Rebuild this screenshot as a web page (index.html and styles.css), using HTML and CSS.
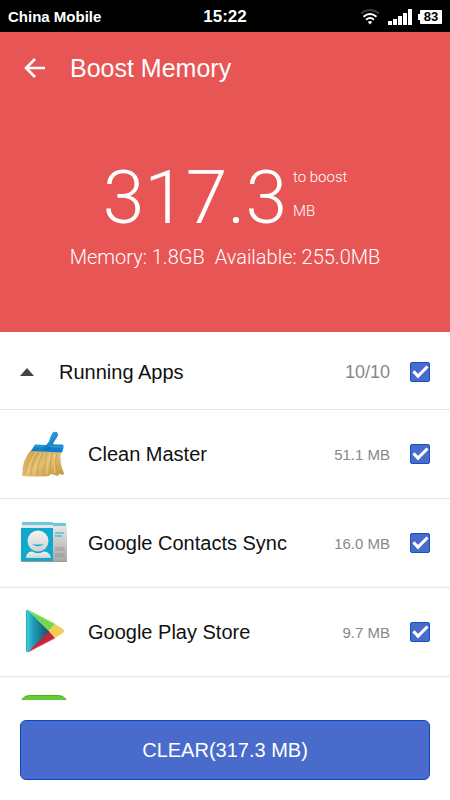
FILE: index.html
```html
<!DOCTYPE html>
<html lang="en">
<head>
    <meta charset="UTF-8">
    <title>Boost Memory</title>
    <meta name="viewport" content="width=device-width, initial-scale=1.0">
    <link rel="stylesheet" href="styles.css">
</head>
<body>
    <div class="status-bar">
        <span class="carrier">China Mobile</span>
        <span class="clock">15:22</span>
        <div class="status-icons">
            <svg class="wifi" width="20" height="16" viewBox="0 0 20 16" fill="none" stroke-width="2">
                <path d="M1 4.500Q10 -2.500 19 4.500" stroke="#3a3a3a"/>
                <path d="M3.500 7.700Q10 2.300 16.500 7.700M6 10.700Q10 7.300 14 10.700" stroke="#fff"/>
                <path d="M7.800 13Q10 11.200 12.200 13L10 15.500z" fill="#fff"/>
            </svg>
            <svg class="signal" width="24" height="16" viewBox="0 0 24 16" fill="#fff">
                <path d="M0 12h4v4H0zM5 10h4v6H5zM10 7h4v9h-4zM15 4h4v12h-4zM20 0h4v16h-4z"/>
            </svg>
            <span class="battery">83</span>
        </div>
    </div>

    <header class="hero">
        <div class="title-bar">
            <a class="back" href="#" aria-label="Back">
                <svg width="22" height="20" viewBox="0 0 22 20" fill="none" stroke="#fff" stroke-width="2.600">
                    <path d="M11 1L2 10l9 9M2 10h19"/>
                </svg>
            </a>
            <h1>Boost Memory</h1>
        </div>
        <div class="amount">
            <span class="amount-value">317.3</span>
            <div class="amount-unit">
                <span>to boost</span>
                <span>MB</span>
            </div>
        </div>
        <div class="memory">
            <span>Memory: 1.8GB</span>
            <span>Available: 255.0MB</span>
        </div>
    </header>

    <main class="app-list">
        <div class="row group">
            <svg class="arrow" width="14" height="8" viewBox="0 0 14 8"><path d="M0 8L7 0l7 8z" fill="#444"/></svg>
            <label class="name" for="all">Running Apps</label>
            <span class="count">10/10</span>
            <input type="checkbox" id="all" checked>
        </div>
        <div class="row">
            <svg class="icon" width="48" height="48" viewBox="0 0 48 48">
                <defs>
                    <linearGradient id="straw" x1="0" y1="0" x2="1" y2="1">
                        <stop offset="0" stop-color="#cba250"/>
                        <stop offset=".5" stop-color="#e3c072"/>
                        <stop offset="1" stop-color="#c0953f"/>
                    </linearGradient>
                    <linearGradient id="handle" x1="0" y1="0" x2="0" y2="1">
                        <stop offset="0" stop-color="#2c95d8"/>
                        <stop offset="1" stop-color="#0d7ccb"/>
                    </linearGradient>
                </defs>
                <path d="M11 20L41 21Q39 33 44 43L43 45 39 44 38 46 31 44 29 46Q17 47 2 46Q2 30 11 20z" fill="url(#straw)"/>
                <path d="M14 23Q6 32 5 44M18 23Q11 33 11 45M23 23Q17 34 17 45M27 23Q24 36 23 45M32 23Q30 34 30 44M37 23Q34 33 38 43" stroke="#b58c43" stroke-width=".5" fill="none"/>
                <path d="M16 22Q9 33 8 43M21 23Q15 34 14 44M30 24Q27 35 27 44M35 24Q33 35 35 43" stroke="#eed28d" stroke-width=".7" fill="none"/>
                <path d="M15 14.500L26 15Q29 13 30 8L32 3.500Q33.500 1 36.500 2Q39 3.500 37.500 6.500L34 12Q32 14 35 14.500L42.500 14.500Q44 15 43.500 17.500L42 22.500 11 21z" fill="url(#handle)"/>
                <path d="M14 16L43 17M33 5L30 11" stroke="#41a9e6" stroke-width=".8" fill="none"/>
                <ellipse cx="27" cy="18" rx="3" ry="1.500" fill="none" stroke="#075f9f" stroke-width=".7"/>
            </svg>
            <label class="name" for="clean">Clean Master</label>
            <span class="size">51.1 MB</span>
            <input type="checkbox" id="clean" checked>
        </div>
        <div class="row">
            <svg class="icon" width="48" height="48" viewBox="0 0 48 48">
                <defs>
                    <linearGradient id="card" x1="0" y1="0" x2="0" y2="1">
                        <stop offset="0" stop-color="#e8e8e6"/>
                        <stop offset="1" stop-color="#a9aaa8"/>
                    </linearGradient>
                    <linearGradient id="person" x1="0" y1="0" x2="0" y2="1">
                        <stop offset="0" stop-color="#f5f5f3"/>
                        <stop offset="1" stop-color="#cfd2d0"/>
                    </linearGradient>
                </defs>
                <path d="M2 3h31v1h13v5H2z" fill="#6cc8e0"/>
                <path d="M1 6h32v1h14v35H1z" fill="url(#card)"/>
                <path d="M1 9h32v33H1z" fill="#0fa9d0"/>
                <path d="M6 39Q6 33 12 32.500Q18 36 24 32.500Q30 33 31 39z" fill="url(#person)"/>
                <ellipse cx="18" cy="22" rx="10.500" ry="10.500" fill="url(#person)"/>
                <path d="M12 25.500h12Q18 29 12 25.500z" fill="#0fa9d0"/>
                <path d="M35 14h9M35 17h7" stroke="#52bcd8" stroke-width="1.500"/>
                <path d="M35 29h9M35 31h10M35 35h9M35 37h10" stroke="#939593" stroke-width=".8"/>
                <path d="M1 42.500h46" stroke="#999"/>
            </svg>
            <label class="name" for="contacts">Google Contacts Sync</label>
            <span class="size">16.0 MB</span>
            <input type="checkbox" id="contacts" checked>
        </div>
        <div class="row">
            <svg class="icon" width="48" height="48" viewBox="0 0 48 48">
                <defs>
                    <linearGradient id="play">
                        <stop offset="0" stop-color="#42d3e5"/>
                        <stop offset=".3" stop-color="#1d9db8"/>
                        <stop offset="1" stop-color="#174c62"/>
                    </linearGradient>
                </defs>
                <path d="M6 3Q6 1 8 2L30 24 8 44Q6 45 6 42z" fill="url(#play)"/>
                <path d="M8 2L35 16 29 23z" fill="#75d84b"/>
                <path d="M29 23L35 30 8 44z" fill="#bd283d"/>
                <path d="M35 16L43 21Q45 23 43 25L35 30 29 23z" fill="#f1cd58"/>
                <path d="M8 2L35 16" stroke="#9cee75"/>
                <path d="M8 44L35 30" stroke="#e45b66"/>
                <path d="M6.500 3v40" stroke="#2aaec2"/>
            </svg>
            <label class="name" for="play-store">Google Play Store</label>
            <span class="size">9.7 MB</span>
            <input type="checkbox" id="play-store" checked>
        </div>
        <div class="row">
            <svg class="icon" width="48" height="52" viewBox="0 0 48 52">
                <rect x="0.500" y="0.500" width="47" height="51" rx="9" fill="#66cc33" stroke="#43b51b"/>
            </svg>
        </div>
    </main>

    <footer class="bottom-bar">
        <button type="button">CLEAR(317.3 MB)</button>
    </footer>
</body>
</html>
```

FILE: styles.css
```css
* {
    box-sizing: border-box;
}

body {
    display: flex;
    flex-direction: column;
    height: 100vh;
    margin: 0;
    background-color: #fff;
    color: #111;
    font-family: "Liberation Sans", Arial, sans-serif;
}

.status-bar {
    display: grid;
    grid-template-columns: 1fr auto 1fr;
    align-items: center;
    flex: none;
    height: 32px;
    padding: 1px 8px 0;
    background-color: #000;
    color: #fff;
    font-weight: bold;
}

.carrier {
    font-size: 15px;
}

.clock {
    font-size: 17px;
}

.status-icons {
    display: flex;
    align-items: center;
    justify-content: flex-end;
    gap: 8px;
}

.battery {
    position: relative;
    width: 22px;
    height: 14px;
    border-radius: 1px;
    background-color: #fff;
    color: #000;
    font-size: 13px;
    line-height: 14px;
    text-align: center;
}

.battery::before {
    content: "";
    position: absolute;
    top: 4px;
    left: -2px;
    width: 2px;
    height: 6px;
    background-color: #fff;
}

.hero {
    flex: none;
    height: 300px;
    background-color: #e85555;
    color: #fff;
    font-family: Roboto, sans-serif;
    font-weight: 300;
}

.title-bar {
    display: flex;
    align-items: center;
    gap: 24px;
    height: 72px;
    padding: 0 24px;
}

.back {
    display: flex;
}

h1 {
    margin: 0;
    font-family: "Liberation Sans", Arial, sans-serif;
    font-size: 25px;
    font-weight: normal;
}

.amount {
    display: flex;
    justify-content: center;
    gap: 6px;
    margin-top: 53px;
}

.amount-value {
    font-size: 75px;
    line-height: 80px;
}

.amount-unit {
    display: flex;
    flex-direction: column;
    gap: 14px;
    padding-top: 10px;
    font-size: 15px;
    line-height: 20px;
}

.memory {
    display: flex;
    justify-content: center;
    gap: 10px;
    margin-top: 7px;
    font-size: 20px;
    line-height: 26px;
}

.app-list {
    flex: 1;
    min-height: 0;
    overflow: hidden;
}

.row {
    display: flex;
    align-items: center;
    gap: 20px;
    height: 89px;
    padding: 0 20px;
    border-bottom: 1px solid #e6e6e6;
}

.group {
    height: 78px;
    padding-top: 3px;
}

.arrow {
    margin-right: 5px;
}

.icon {
    flex: none;
}

.name {
    flex: 1;
    font-size: 20px;
}

.count {
    color: #888;
    font-size: 18px;
}

.size {
    color: #888;
    font-size: 15px;
}

input[type="checkbox"] {
    appearance: none;
    display: grid;
    place-items: center;
    width: 20px;
    height: 20px;
    margin: 0;
    border: 1px solid #1550c4;
    border-radius: 2px;
    background-color: #486bcc;
}

input[type="checkbox"]:checked::before {
    content: "";
    box-sizing: border-box;
    width: 15px;
    height: 8px;
    border: solid #fff;
    border-width: 0 0 3px 3px;
    transform: translateY(-2px) rotate(-45deg);
}

.bottom-bar {
    flex: none;
    padding: 20px;
}

button {
    width: 100%;
    height: 60px;
    border: 1px solid #0a48c2;
    border-radius: 6px;
    background-color: #486bcc;
    color: #fff;
    font-family: inherit;
    font-size: 20px;
}
```
